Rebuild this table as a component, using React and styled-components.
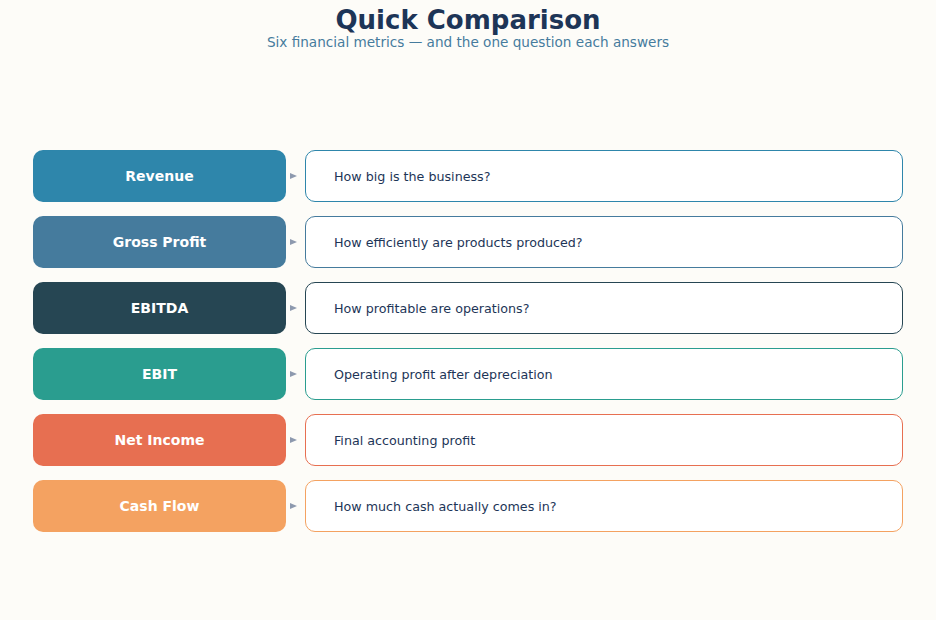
import React from "react";
import styled, { createGlobalStyle } from "styled-components";

const Global = createGlobalStyle`
  html, body { margin: 0; padding: 0; background: #fdfcf8; }
  body { font-family: "DejaVu Sans", Verdana, sans-serif; }
`;

const Page = styled.div`
  width: 936px;
  height: 620px;
  display: flex;
  flex-direction: column;
  background: #fdfcf8;
  box-sizing: border-box;
`;

const Header = styled.header`
  display: flex;
  flex-direction: column;
  align-items: center;
  padding-top: 5px;
  height: 60px;
  box-sizing: border-box;
`;

const Title = styled.h1`
  margin: 0;
  font-size: 26px;
  line-height: 30px;
  font-weight: 700;
  color: #1d3557;
`;

const Subtitle = styled.p`
  margin: -2px 0 0;
  font-size: 13.6px;
  line-height: 18px;
  color: #457b9d;
`;

const List = styled.main`
  flex: 1;
  display: flex;
  flex-direction: column;
  justify-content: center;
  gap: 14px;
  padding: 2px 33px 0;
  box-sizing: border-box;
`;

const Row = styled.div`
  display: grid;
  grid-template-columns: 253px 19px 1fr;
  height: 52px;
  align-items: center;
`;

const Label = styled.div`
  height: 52px;
  border-radius: 10px;
  background: ${(p) => p.$color};
  color: #fff;
  font-weight: 700;
  font-size: 14px;
  display: flex;
  align-items: center;
  justify-content: center;
`;

const Arrow = styled.span`
  justify-self: center;
  margin-left: -4px;
  width: 0;
  height: 0;
  border-top: 3px solid transparent;
  border-bottom: 3px solid transparent;
  border-left: 7px solid #8d99ae;
`;

const Answer = styled.div`
  height: 52px;
  box-sizing: border-box;
  border: 1.5px solid ${(p) => p.$color};
  border-radius: 10px;
  background: #fff;
  display: flex;
  align-items: center;
  padding-left: 28px;
  font-size: 12.7px;
  color: #1d3557;
`;

const rows = [
  { label: "Revenue", color: "#2e86ab", q: "How big is the business?" },
  { label: "Gross Profit", color: "#457b9d", q: "How efficiently are products produced?" },
  { label: "EBITDA", color: "#264653", q: "How profitable are operations?" },
  { label: "EBIT", color: "#2a9d8f", q: "Operating profit after depreciation" },
  { label: "Net Income", color: "#e76f51", q: "Final accounting profit" },
  { label: "Cash Flow", color: "#f4a261", q: "How much cash actually comes in?" },
];

export default function App() {
  return (
    <Page>
      <Global />
      <Header>
        <Title>Quick Comparison</Title>
        <Subtitle>Six financial metrics — and the one question each answers</Subtitle>
      </Header>
      <List>
        {rows.map((r) => (
          <Row key={r.label}>
            <Label $color={r.color}>{r.label}</Label>
            <Arrow />
            <Answer $color={r.color}>{r.q}</Answer>
          </Row>
        ))}
      </List>
    </Page>
  );
}
